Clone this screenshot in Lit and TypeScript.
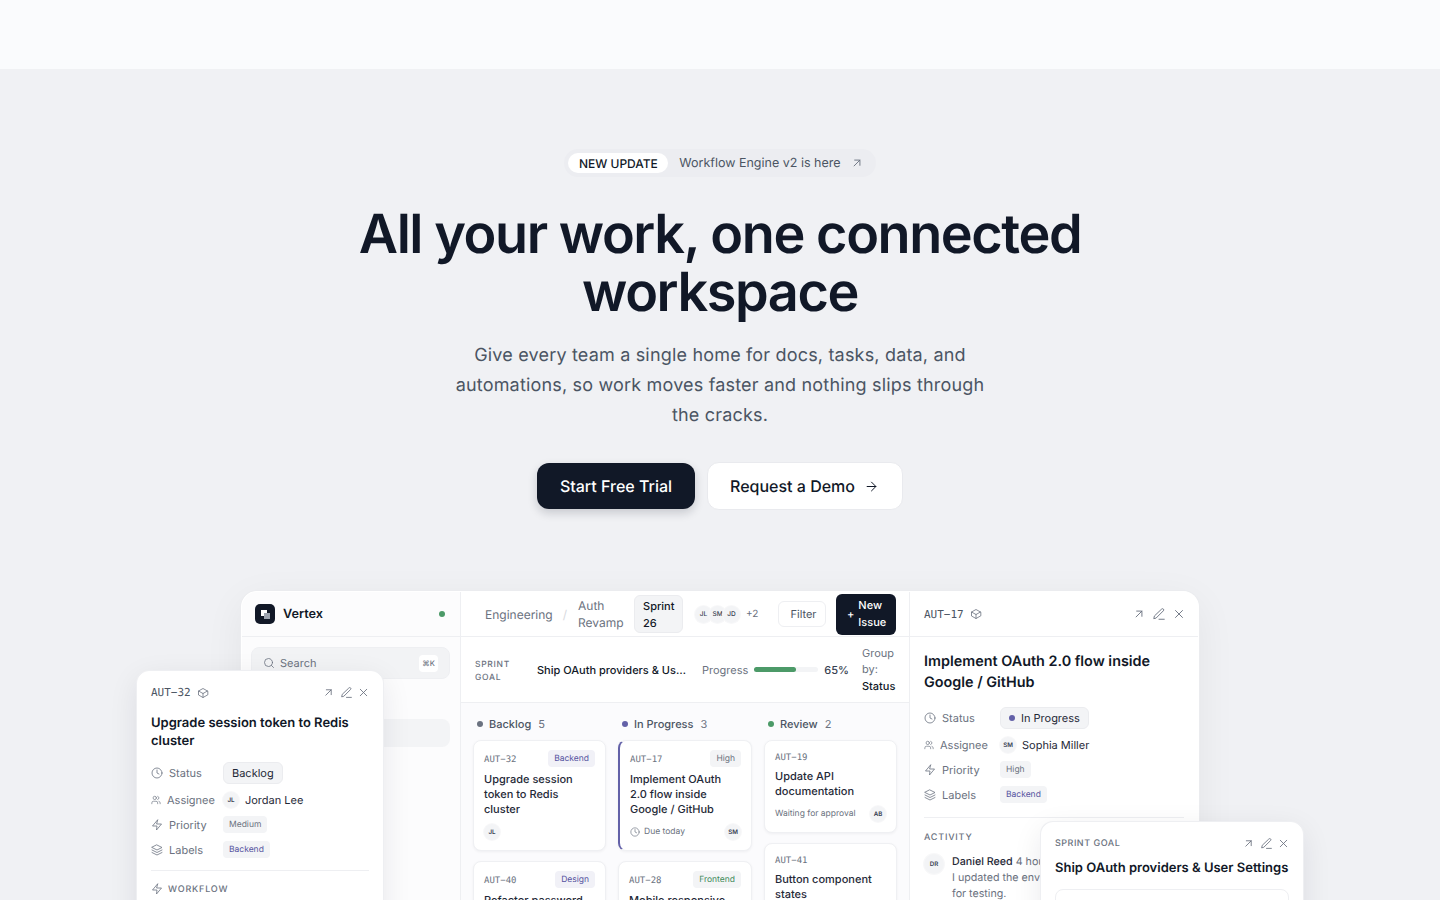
import { LitElement, html, css, svg } from "lit";
import { customElement } from "lit/decorators.js";

const ic = (body: unknown, size = 12, cls = "") => html`<svg class="ic ${cls}" width=${size} height=${size} viewBox="0 0 24 24" fill="none" stroke="currentColor" stroke-width="1.6" stroke-linecap="round" stroke-linejoin="round">${body}</svg>`;
const clock = svg`<circle cx="12" cy="12" r="10"/><path d="M12 6v6l4 2"/>`;
const users = svg`<path d="M16 21v-2a4 4 0 0 0-4-4H6a4 4 0 0 0-4 4v2"/><circle cx="9" cy="7" r="4"/><path d="M22 21v-2a4 4 0 0 0-3-3.87"/><path d="M16 3.13a4 4 0 0 1 0 7.75"/>`;
const zap = svg`<path d="M13 2 3 14h9l-1 8 10-12h-9z"/>`;
const layers = svg`<path d="m12 2 10 5-10 5L2 7z"/><path d="m2 12 10 5 10-5"/><path d="m2 17 10 5 10-5"/>`;
const box = svg`<path d="M21 8 12 3 3 8v8l9 5 9-5z"/><path d="m3 8 9 5 9-5"/><path d="M12 13v8"/>`;
const upRight = svg`<path d="M7 17 17 7"/><path d="M8 7h9v9"/>`;
const pen = svg`<path d="M12 21h9"/><path d="M16.5 3.5a2.1 2.1 0 0 1 3 3L7 19l-4 1 1-4z"/>`;
const x = svg`<path d="M18 6 6 18"/><path d="m6 6 12 12"/>`;
const arrow = svg`<path d="M5 12h14"/><path d="m12 5 7 7-7 7"/>`;
const search = svg`<circle cx="11" cy="11" r="8"/><path d="m21 21-4.3-4.3"/>`;

@customElement("app-root")
export class AppRoot extends LitElement {
  static styles = css`
    :host { display: block; height: 900px; overflow: hidden; background: #f0f1f4; font-family: Inter, "Noto Sans", sans-serif; color: #111827; position: relative; text-rendering: geometricPrecision; -webkit-font-smoothing: antialiased; }
    * { box-sizing: border-box; }
    .ic { display: block; flex: none; }
    .top { height: 69px; background: #fafbfd; }
    .hero { display: flex; flex-direction: column; align-items: center; padding-top: 80px; }
    .pill { display: flex; align-items: center; height: 28px; padding: 0 12px 0 4px; border-radius: 14px; background: #ecedf1; font-size: 12.5px; color: #4b5563; }
    .pill b { display: flex; align-items: center; height: 20px; padding: 0 10.5px; background: #fff; border-radius: 10px; font-weight: 500; font-size: 12px; color: #111827; margin-right: 11px; }
    .pill .ic { margin-left: 9px; color: #6b7280; }
    h1 { margin: 29px 0 0; font-size: 54px; line-height: 58px; font-weight: 600; letter-spacing: -1.43px; text-align: center; width: 800px; color: #111827; }
    .sub { margin: 19px 0 0; width: 540px; font-size: 18px; letter-spacing: .18px; line-height: 30px; text-align: center; color: #4b5563; }
    .btns { display: flex; gap: 12px; margin-top: 32px; }
    .btn { height: 46px; display: flex; align-items: center; border-radius: 12px; font-size: 16px; font-weight: 500; }
    .btn.dark { width: 158px; justify-content: center; background: #111827; color: #fff; box-shadow: 0 4px 10px rgba(17,24,39,.18); }
    .btn.light { width: 196px; height: 48px; margin-top: -1px; padding-left: 22px; gap: 9px; background: #fff; color: #111827; border: 1px solid #e9eaee; }
    .stage { position: relative; width: 958px; align-self: flex-start; margin: 81px 0 0 241px; }
    .win { display: grid; grid-template-columns: 219px 449px 288px; height: 560px; background: #fff; border: 1px solid #fff; border-bottom: 0; border-radius: 16px 16px 0 0; overflow: hidden; box-shadow: 0 0 0 1px #ebecef, 0 10px 40px rgba(17,24,39,.06); }
    .side { background: #fcfcfd; border-right: 1px solid #eeeff2; }
    .brand { height: 45px; display: flex; align-items: center; padding: 0 15px 0 13px; gap: 8px; border-bottom: 1px solid #eeeff2; font-size: 12.7px; font-weight: 600; }
    .logo { width: 20px; height: 20px; background: #111827; border-radius: 5px; position: relative; }
    .logo i { position: absolute; width: 6px; height: 6px; left: 5.5px; top: 5.5px; background: #fff; }
    .logo i + i { left: 8.5px; top: 8.5px; background: #9ca3af; }
    .dot { width: 6px; height: 6px; border-radius: 50%; background: #4c9a68; flex: none; }
    .brand .dot { margin-left: auto; }
    .searchbar { margin: 10px 10px 0 9px; height: 32px; display: flex; align-items: center; gap: 5px; padding: 0 11px 0 11px; background: #f2f3f5; border: 1px solid #eeeff2; border-radius: 8px; font-size: 11px; color: #6b7280; }
    .searchbar kbd { margin-left: auto; width: 19px; height: 17px; background: #fff; border-radius: 4px; font: 500 7.5px Inter; color: #6b7280; display: flex; align-items: center; justify-content: center; }
    .navitem { margin: 40px 10px 0 9px; height: 28px; background: #f3f4f6; border-radius: 8px; }
    .main { background: #fbfbfd; border-right: 1px solid #eeeff2; min-width: 0; }
    .bar { height: 45px; background: #fff; border-bottom: 1px solid #eeeff2; display: flex; align-items: center; padding: 0 13px 0 24px; font-size: 12px; color: #6b7280; }
    .slash { margin-left: 10px; color: #d8dae0; }
    .crumb2 { width: 46px; line-height: 17px; margin: -1px 0 0 11px; }
    .sprint { width: 49px; height: 38px; margin: -1px 0 0 10px; padding: 2px 8px; line-height: 17px; font-size: 11px; font-weight: 500; color: #111827; background: #f3f4f6; border: 1px solid #ebecef; border-radius: 6px; }
    .avs { display: flex; margin-left: 12px; }
    .av { width: 16px; height: 16px; border-radius: 50%; background: #f3f4f6; box-shadow: 0 0 0 1px #f8f8f9; color: #374151; font: 600 6.2px Inter; display: flex; align-items: center; justify-content: center; flex: none; }
    .avs .av { width: 17px; height: 17px; margin-right: -3px; font-size: 6.5px; font-weight: 500; }
    .more { margin-left: 9px; font-size: 10px; }
    .filter { margin-left: auto; height: 26px; width: 48px; padding-left: 3px; display: flex; align-items: center; justify-content: center; border: 1px solid #eeeff2; border-radius: 6px; font-size: 11px; color: #4b5563; }
    .new { margin-left: 10px; width: 60px; height: 41px; flex: none; background: #111827; color: #fff; border-radius: 6px; display: flex; align-items: center; padding-left: 11px; font-size: 11px; font-weight: 500; line-height: 17px; gap: 4px; }
    .new span { width: 30px; }
    .goal { height: 66px; background: #fff; border-bottom: 1px solid #eeeff2; display: flex; align-items: center; padding-left: 14px; font-size: 11px; color: #6b7280; }
    .goal .lab { width: 62px; flex: none; margin-top: 5px; font-size: 8.5px; line-height: 13px; letter-spacing: .7px; font-weight: 500; }
    .goal .name { width: 150px; flex: none; font-size: 11px; font-weight: 500; color: #111827; white-space: nowrap; overflow: hidden; text-overflow: ellipsis; }
    .goal .prog { margin-left: 15px; }
    .track { width: 64px; height: 5px; border-radius: 3px; background: #f3f4f6; margin-left: 6px; flex: none; }
    .track i { display: block; width: 42px; height: 5px; border-radius: 3px; background: #4c9a68; }
    .pct { margin-left: 6px; font-weight: 500; font-size: 11px; color: #374151; }
    .group { margin-left: 13px; width: 40px; line-height: 16.5px; }
    .group b { font-weight: 500; color: #111827; }
    .cols { display: grid; grid-template-columns: 133px 134px 133px; gap: 12px; padding: 13px 12px 0; }
    .colhead { display: flex; align-items: center; height: 16px; padding-left: 4px; gap: 6px; font-size: 11px; font-weight: 500; color: #4b5563; margin-bottom: 8px; }
    .colhead span { margin-left: 1px; color: #6b7280; font-weight: 400; }
    .card { position: relative; background: #fff; border: 1px solid #eff0f3; border-radius: 8px; padding: 9px 10px 10px; margin-bottom: 10px; box-shadow: 0 1px 3px rgba(17,24,39,.05); }
    .card.act { border-left: 2px solid #6361a8; }
    .chead { display: flex; justify-content: space-between; align-items: center; min-height: 14px; }
    .mono { font-family: "DejaVu Sans Mono", monospace; font-size: 9px; color: #6b7280; padding-top: 2px; }
    .tag { padding: 0 6px; height: 17px; border-radius: 4px; font-size: 8.5px; line-height: 19px; background: #f3f4f6; color: #6b7280; }
    .tag.be { color: #5653a0; background: #f1f1f7; }
    .tag.fe { color: #3f8a5a; }
    .title { margin-top: 5px; padding-right: 4px; font-size: 11px; line-height: 15px; color: #1f2937; font-weight: 500; }
    .foot { display: flex; align-items: center; justify-content: space-between; margin-top: 7px; font-size: 8.5px; color: #6b7280; height: 16px; }
    .foot .l { display: flex; align-items: center; gap: 4px; }
    .detail { background: #fff; min-width: 0; }
    .dhead { height: 45px; display: flex; align-items: center; padding: 0 12px 0 14px; border-bottom: 1px solid #eeeff2; }
    .dhead .mono, .fhead .mono { font-size: 11px; color: #4b5563; padding-top: 0; }
    .dhead .ic.bx, .fhead .ic.bx { margin-left: 6px; color: #6b7280; }
    .tools { margin-left: auto; display: flex; gap: 6px; color: #6b7280; }
    .f1 .tools, .f2 .tools { gap: 4.5px; margin-right: -1px; }
    .dbody { padding: 14px 14px; }
    .dtitle { font-size: 14.4px; line-height: 21px; font-weight: 600; color: #111827; }
    .rows { display: grid; grid-template-columns: 76px auto; grid-template-rows: 27px 26px 25px 25px; justify-content: start; margin-top: 11px; font-size: 11px; align-items: center; }
    .k { display: flex; align-items: center; gap: 6px; color: #6b7280; }
    .k.as, .k.as + .v { margin-top: 2px; }
    .v { display: flex; align-items: center; gap: 6px; color: #1f2937; }
    .st { display: flex; align-items: center; gap: 6px; height: 22px; padding: 0 8px; background: #f3f4f6; border: 1px solid #ebecef; border-radius: 6px; color: #1f2937; }
    .st .dot { background: #6361a8; }
    .sm { display: block; height: 17px; line-height: 19px; padding: 0 6px; background: #f3f4f6; border-radius: 4px; font-size: 8.5px; color: #6b7280; }
    .sm.be { color: #5653a0; }
    hr { border: 0; border-top: 1px solid #eeeff2; margin: 10px 0 0; }
    .act-h { margin-top: 14px; font-size: 9px; line-height: 11px; letter-spacing: .8px; font-weight: 500; color: #6b7280; }
    .cmt { display: flex; gap: 8px; margin-top: 11px; }
    .cmt .av { width: 20px; height: 20px; }
    .cmt div { font-size: 10.7px; line-height: 16px; color: #6b7280; white-space: nowrap; }
    .cmt b { font-weight: 500; color: #1f2937; }
    .float { position: absolute; background: #fff; border: 1px solid #fff; border-radius: 12px; box-shadow: 0 0 0 1px #eeeff2, 0 8px 30px rgba(17,24,39,.09); }
    .f1 { left: -104px; top: 80px; width: 246px; height: 260px; padding: 0 13px; }
    .fhead { display: flex; align-items: center; height: 41px; }
    .f1 .dtitle { font-size: 13px; line-height: 18px; margin-top: 1px; }
    .f1 .rows { margin-top: 9px; grid-template-columns: 72px auto; }
    .f1 hr { margin-top: 8px; }
    .wf { display: flex; align-items: center; gap: 5px; margin-top: 12px; font-size: 9px; letter-spacing: .8px; font-weight: 500; color: #6b7280; }
    .f2 { left: 800px; top: 231px; width: 262px; height: 160px; padding: 0 13px; }
    .fl { font-size: 9px; letter-spacing: .5px; font-weight: 500; color: #6b7280; }
    .f2 .dtitle { font-size: 13px; line-height: 18px; margin-top: -5px; white-space: nowrap; }
    .inner { margin-top: 12px; height: 60px; border: 1px solid #eeeff2; border-radius: 8px; }
  `;

  private row(icon: unknown, key: string, val: unknown) {
    const small = key === "Assignee";
    return html`<div class="k ${small ? "as" : ""}">${ic(icon, small ? 10 : 12)}${key}</div><div class="v">${val}</div>`;
  }

  private card(id: string, tag: string, tagCls: string, title: string, foot: unknown, act = false) {
    return html`<div class="card ${act ? "act" : ""}">
      <div class="chead"><span class="mono">${id}</span>${tag ? html`<span class="tag ${tagCls}">${tag}</span>` : ""}</div>
      <div class="title">${title}</div>
      ${foot ? html`<div class="foot">${foot}</div>` : ""}
    </div>`;
  }

  render() {
    const tools = (s = 14) => html`<div class="tools">${ic(upRight, s)}${ic(pen, s)}${ic(x, s)}</div>`;
    return html`
      <div class="top"></div>
      <div class="hero">
        <div class="pill"><b>NEW UPDATE</b>Workflow Engine v2 is here${ic(upRight, 14)}</div>
        <h1>All your work, one connected workspace</h1>
        <p class="sub">Give every team a single home for docs, tasks, data, and automations, so work moves faster and nothing slips through the cracks.</p>
        <div class="btns">
          <div class="btn dark">Start Free Trial</div>
          <div class="btn light">Request a Demo${ic(arrow, 15)}</div>
        </div>
        <div class="stage">
          <div class="win">
            <aside class="side">
              <div class="brand"><div class="logo"><i></i><i></i></div>Vertex<span class="dot"></span></div>
              <div class="searchbar">${ic(search, 12)}Search<kbd>⌘K</kbd></div>
              <div class="navitem"></div>
            </aside>
            <section class="main">
              <div class="bar">
                <span>Engineering</span><span class="slash">/</span>
                <span class="crumb2">Auth Revamp</span>
                <span class="sprint">Sprint 26</span>
                <div class="avs"><span class="av">JL</span><span class="av">SM</span><span class="av">JD</span></div>
                <span class="more">+2</span>
                <span class="filter">Filter</span>
                <span class="new">+<span>New Issue</span></span>
              </div>
              <div class="goal">
                <span class="lab">SPRINT GOAL</span>
                <span class="name">Ship OAuth providers &amp; User Settings</span>
                <span class="prog">Progress</span>
                <span class="track"><i></i></span>
                <span class="pct">65%</span>
                <span class="group">Group by: <b>Status</b></span>
              </div>
              <div class="cols">
                <div class="col">
                  <div class="colhead"><i class="dot" style="background:#6b7280"></i>Backlog <span>5</span></div>
                  ${this.card("AUT−32", "Backend", "be", "Upgrade session token to Redis cluster", html`<span class="av">JL</span>`)}
                  ${this.card("AUT−40", "Design", "be", "Refactor password reset flow", null)}
                </div>
                <div class="col">
                  <div class="colhead"><i class="dot" style="background:#6361a8"></i>In Progress <span>3</span></div>
                  ${this.card("AUT−17", "High", "", "Implement OAuth 2.0 flow inside Google / GitHub", html`<span class="l">${ic(clock, 10)}Due today</span><span class="av">SM</span>`, true)}
                  ${this.card("AUT−28", "Frontend", "fe", "Mobile responsive layout", null)}
                </div>
                <div class="col">
                  <div class="colhead"><i class="dot"></i>Review <span>2</span></div>
                  ${this.card("AUT−19", "", "", "Update API documentation", html`<span>Waiting for approval</span><span class="av">AB</span>`)}
                  ${this.card("AUT−41", "", "", "Button component states", null)}
                </div>
              </div>
            </section>
            <aside class="detail">
              <div class="dhead"><span class="mono">AUT−17</span>${ic(box, 12, "bx")}${tools()}</div>
              <div class="dbody">
                <div class="dtitle">Implement OAuth 2.0 flow inside Google / GitHub</div>
                <div class="rows">
                  ${this.row(clock, "Status", html`<span class="st"><i class="dot"></i>In Progress</span>`)}
                  ${this.row(users, "Assignee", html`<span class="av">SM</span>Sophia Miller`)}
                  ${this.row(zap, "Priority", html`<span class="sm">High</span>`)}
                  ${this.row(layers, "Labels", html`<span class="sm be">Backend</span>`)}
                </div>
                <hr />
                <div class="act-h">ACTIVITY</div>
                <div class="cmt"><span class="av">DR</span><div><b>Daniel Reed</b> 4 hours ago<br />I updated the env<br />for testing.</div></div>
              </div>
            </aside>
          </div>
          <div class="float f1">
            <div class="fhead"><span class="mono">AUT−32</span>${ic(box, 12, "bx")}${tools(13)}</div>
            <div class="dtitle">Upgrade session token to Redis cluster</div>
            <div class="rows">
              ${this.row(clock, "Status", html`<span class="st">Backlog</span>`)}
              ${this.row(users, "Assignee", html`<span class="av">JL</span>Jordan Lee`)}
              ${this.row(zap, "Priority", html`<span class="sm">Medium</span>`)}
              ${this.row(layers, "Labels", html`<span class="sm be">Backend</span>`)}
            </div>
            <hr />
            <div class="wf">${ic(zap, 12)}WORKFLOW</div>
          </div>
          <div class="float f2">
            <div class="fhead"><span class="fl">SPRINT GOAL</span>${tools(13)}</div>
            <div class="dtitle">Ship OAuth providers &amp; User Settings</div>
            <div class="inner"></div>
          </div>
        </div>
      </div>
    `;
  }
}
